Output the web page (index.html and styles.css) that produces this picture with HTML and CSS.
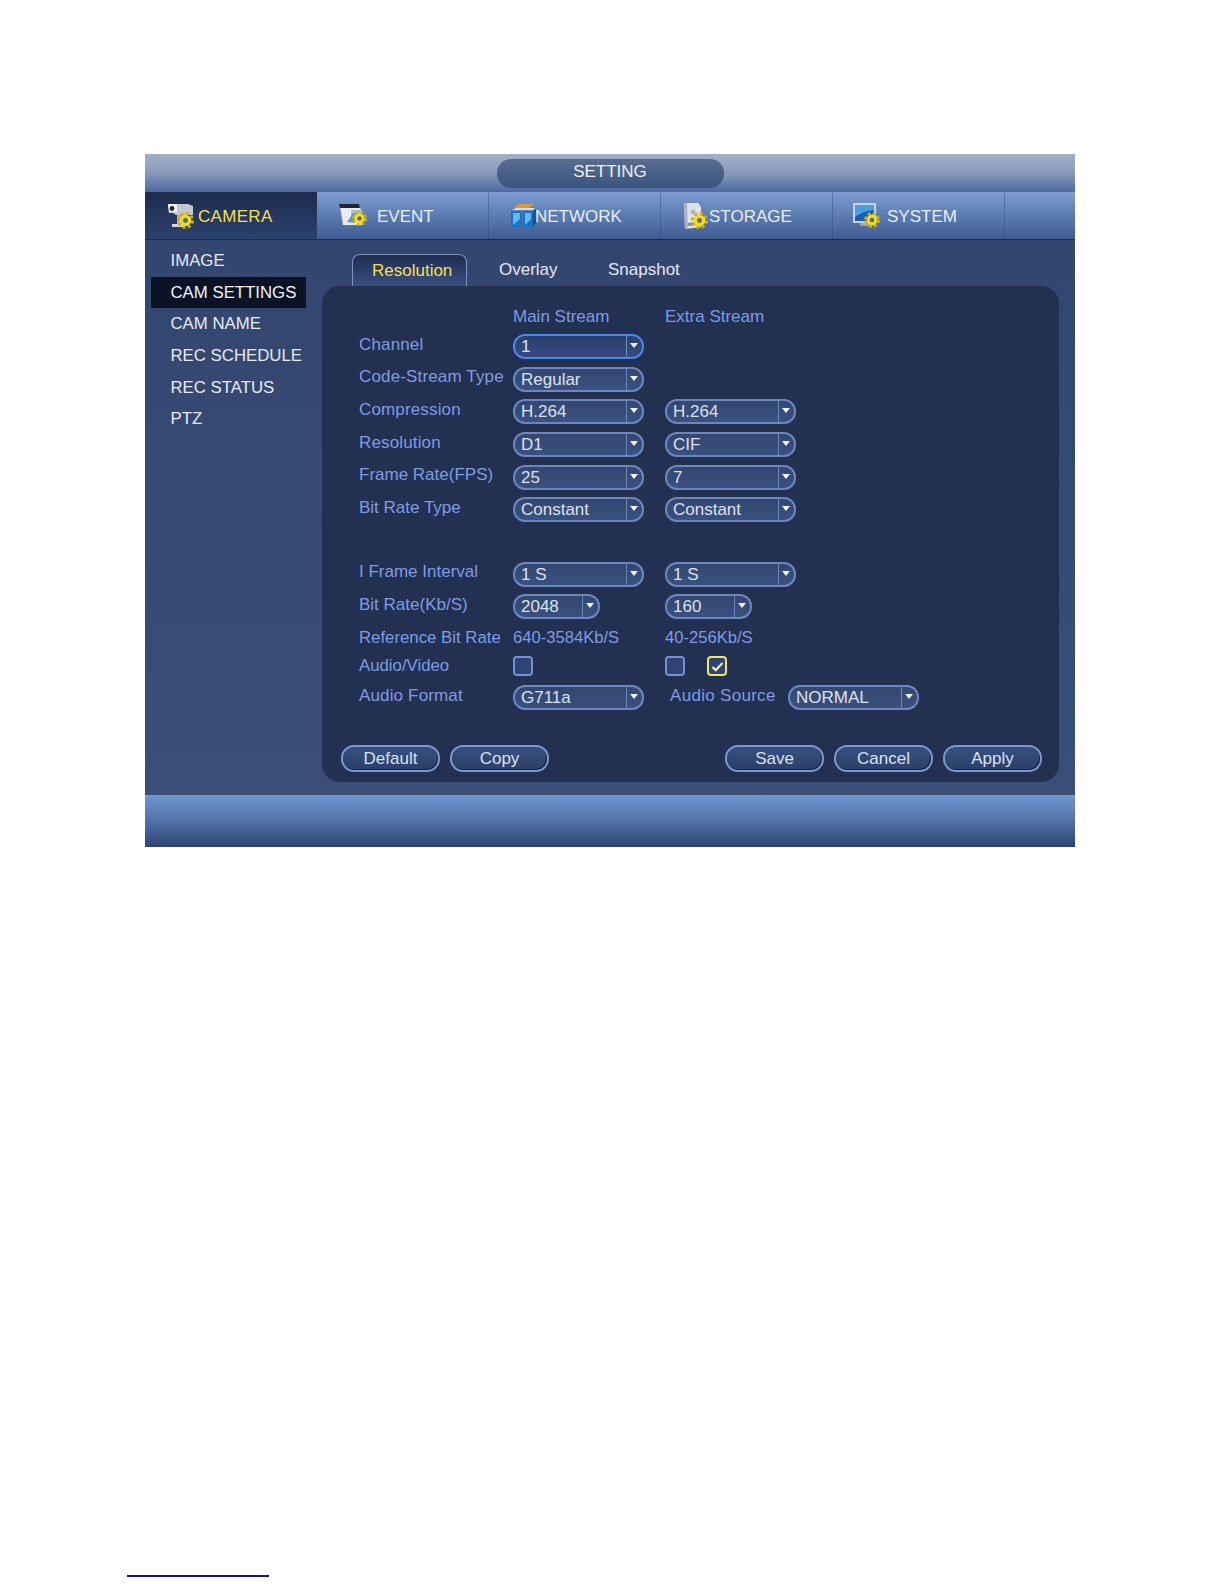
FILE: index.html
```html
<!DOCTYPE html>
<html lang="en">
<head>
  <meta charset="UTF-8" />
  <title>Setting - Camera</title>
  <link rel="stylesheet" href="styles.css">
</head>
<body>
  <svg class="defs" width="0" height="0">
    <symbol id="gear" viewBox="0 0 16 16">
      <circle cx="8" cy="8" r="6.4" fill="none" stroke="#cfae10" stroke-width="3.2" stroke-dasharray="2.8 2.23"/>
      <circle cx="8" cy="8" r="5.4" fill="#f3dc1e"/>
      <circle cx="8" cy="8" r="2.3" fill="#56687a"/>
    </symbol>
  </svg>

  <div class="page">
    <div class="dvr">
      <div class="title-bar">
        <div class="title-pill">SETTING</div>
      </div>

      <div class="nav">
        <div class="nav-tab nav-camera active">
          <svg class="nav-icon" width="27" height="26" viewBox="0 0 27 26">
            <path d="M1 1h20l5 2v9H9L6 10H2z" fill="#c3c9d2"/>
            <path d="M1 1h9v8H2z" fill="#f2f4f6"/>
            <circle cx="5" cy="5.5" r="2.4" fill="#20242c"/>
            <path d="M10 11h5v10h-5z" fill="#aeb6c2"/>
            <path d="M5 21h11v3H5z" fill="#d5dae0"/>
            <use href="#gear" x="10" y="9" width="17" height="17"/>
          </svg>
          <span>CAMERA</span>
        </div>
        <div class="nav-tab nav-event">
          <svg class="nav-icon" width="28" height="23" viewBox="0 0 28 23">
            <path d="M1 2h19l3 6v13H4z" fill="#e8ecf2"/>
            <path d="M12 6h9l2 3v6H12z" fill="#aebcd0"/>
            <path d="M0 0h20l1 4H1z" fill="#23262c"/>
            <path d="M8 18l6-9h2v10z" fill="#6f93c6"/>
            <use href="#gear" x="13" y="7" width="15" height="15"/>
          </svg>
          <span>EVENT</span>
        </div>
        <div class="nav-tab nav-network">
          <svg class="nav-icon" width="25" height="23" viewBox="0 0 25 23">
            <path d="M7 0h16l-5 4H4z" fill="#d99a3a"/>
            <path d="M1 6l4-2h19l-2 2z" fill="#cfe0ef"/>
            <path d="M0 7h11v16H0z" fill="#1a72c8"/>
            <path d="M12 7h10v16H12z" fill="#1a72c8"/>
            <path d="M2 9h7v6l-7 6zM14 9h6v6l-6 6z" fill="#63b8f2"/>
            <path d="M22 7l3-2v14l-3 4z" fill="#12508f"/>
          </svg>
          <span>NETWORK</span>
        </div>
        <div class="nav-tab nav-storage">
          <svg class="nav-icon" width="25" height="26" viewBox="0 0 25 26">
            <path d="M1 0h14l3 4v20L2 26z" fill="#dfe4ec"/>
            <path d="M1 0h3l1 26H2z" fill="#a9b3c2"/>
            <path d="M10 6l3 3-3 3-3-3z" fill="#aab4c4"/>
            <path d="M5 20l8-1v3l-8 1z" fill="#7d8797"/>
            <use href="#gear" x="8" y="9" width="17" height="17"/>
          </svg>
          <span>STORAGE</span>
        </div>
        <div class="nav-tab nav-system">
          <svg class="nav-icon" width="27" height="25" viewBox="0 0 27 25">
            <path d="M0 0h23v20H0z" fill="#c9d2de"/>
            <path d="M2 2h19v16H2z" fill="#1a5cae"/>
            <path d="M2 2h19v5Q10 8 2 14z" fill="#4a9be0"/>
            <path d="M7 20h10v3H7z" fill="#9aa6b6"/>
            <use href="#gear" x="11" y="9" width="16" height="16"/>
          </svg>
          <span>SYSTEM</span>
        </div>
      </div>

      <div class="main">
        <ul class="sidebar">
          <li>IMAGE</li>
          <li class="selected">CAM SETTINGS</li>
          <li>CAM NAME</li>
          <li>REC SCHEDULE</li>
          <li>REC STATUS</li>
          <li>PTZ</li>
        </ul>

        <div class="content">
          <div class="tabs">
            <div class="tab active">Resolution</div>
            <div class="tab">Overlay</div>
            <div class="tab">Snapshot</div>
          </div>

          <div class="panel">
            <div class="form">
              <div class="row row-head">
                <div class="label"></div>
                <div class="col">Main Stream</div>
                <div class="col">Extra Stream</div>
              </div>
              <div class="row">
                <div class="label wide">Channel</div>
                <div class="col"><div class="select focus"><span>1</span><i></i></div></div>
              </div>
              <div class="row">
                <div class="label wide">Code-Stream Type</div>
                <div class="col"><div class="select"><span>Regular</span><i></i></div></div>
              </div>
              <div class="row">
                <div class="label wide">Compression</div>
                <div class="col"><div class="select"><span>H.264</span><i></i></div></div>
                <div class="col"><div class="select"><span>H.264</span><i></i></div></div>
              </div>
              <div class="row">
                <div class="label wide">Resolution</div>
                <div class="col"><div class="select"><span>D1</span><i></i></div></div>
                <div class="col"><div class="select"><span>CIF</span><i></i></div></div>
              </div>
              <div class="row">
                <div class="label">Frame Rate(FPS)</div>
                <div class="col"><div class="select"><span>25</span><i></i></div></div>
                <div class="col"><div class="select"><span>7</span><i></i></div></div>
              </div>
              <div class="row">
                <div class="label">Bit Rate Type</div>
                <div class="col"><div class="select"><span>Constant</span><i></i></div></div>
                <div class="col"><div class="select"><span>Constant</span><i></i></div></div>
              </div>
              <div class="row row-gap">
                <div class="label">I Frame Interval</div>
                <div class="col"><div class="select"><span>1 S</span><i></i></div></div>
                <div class="col"><div class="select"><span>1 S</span><i></i></div></div>
              </div>
              <div class="row">
                <div class="label">Bit Rate(Kb/S)</div>
                <div class="col"><div class="select small"><span>2048</span><i></i></div></div>
                <div class="col"><div class="select small"><span>160</span><i></i></div></div>
              </div>
              <div class="row row-ref">
                <div class="label flat">Reference Bit Rate</div>
                <div class="col">640-3584Kb/S</div>
                <div class="col">40-256Kb/S</div>
              </div>
              <div class="row row-check">
                <div class="label flat">Audio/Video</div>
                <div class="col"><div class="check"></div></div>
                <div class="col checks">
                  <div class="check"></div>
                  <div class="check on">
                    <svg width="15" height="15" viewBox="0 0 15 15"><path d="M2.5 8l3.2 3.2L12.5 4" fill="none" stroke="#f6f0c8" stroke-width="2"/></svg>
                  </div>
                </div>
              </div>
              <div class="row row-last">
                <div class="label wide">Audio Format</div>
                <div class="col"><div class="select"><span>G711a</span><i></i></div></div>
                <div class="label wide source">Audio Source</div>
                <div class="select"><span>NORMAL</span><i></i></div>
              </div>
            </div>

            <div class="buttons">
              <button class="btn">Default</button>
              <button class="btn">Copy</button>
              <div class="spacer"></div>
              <button class="btn">Save</button>
              <button class="btn">Cancel</button>
              <button class="btn">Apply</button>
            </div>
          </div>
        </div>
      </div>

      <div class="footer"></div>
    </div>

    <div class="foot-rule"></div>
  </div>
</body>
</html>
```

FILE: styles.css
```css
body {
  margin: 0;
  background: #fff;
  font-family: "Liberation Sans", Arial, sans-serif;
  font-size: 17px;
}

.defs {
  position: absolute;
}

.page {
  padding: 154px 0 0 127px;
}

.dvr {
  width: 930px;
  margin-left: 18px;
}

.title-bar {
  height: 38px;
  display: flex;
  justify-content: center;
  align-items: center;
  background: linear-gradient(#a3afc6, #8c9dbd 45%, #4d6a9f);
}

.title-pill {
  width: 227px;
  height: 29px;
  line-height: 26px;
  text-align: center;
  border-radius: 14px;
  color: #eef1f6;
  background: linear-gradient(#596c8f, #4a6187 50%, #3a5482);
}

.nav {
  height: 48px;
  display: flex;
  border-bottom: 1px solid #1d2c4e;
  box-sizing: border-box;
  background: linear-gradient(#7f9dd3, #5f7fb4 45%, #3f5c92);
}

.nav-tab {
  width: 172px;
  box-sizing: border-box;
  display: flex;
  align-items: center;
  padding-left: 22px;
  border-right: 1px solid rgba(40, 60, 100, 0.35);
  color: #e8eef8;
}

.nav-tab span {
  padding-top: 2px;
}

.nav-tab.active {
  border-right: 0;
  color: #f4e04e;
  background: linear-gradient(#1d2c4e, #2c416d);
}

.nav-tab.active span {
  letter-spacing: 0.3px;
}

.nav-icon {
  flex: none;
}

.nav-camera .nav-icon { margin-right: 4px; }
.nav-event .nav-icon { margin-right: 10px; }
.nav-network .nav-icon { margin-right: -1px; }
.nav-storage .nav-icon { margin-right: 1px; }
.nav-system .nav-icon { margin-left: -2px; margin-right: 7px; }

.main {
  height: 555px;
  display: flex;
  background: linear-gradient(#33466f, #3a4e78);
}

.sidebar {
  width: 177px;
  box-sizing: border-box;
  margin: 0;
  padding: 5px 0 0 6px;
  list-style: none;
  color: #e6ebf4;
  font-size: 16.8px;
}

.sidebar li {
  width: 155px;
  height: 31.7px;
  line-height: 31.7px;
  box-sizing: border-box;
  padding-left: 19.5px;
  white-space: nowrap;
}

.sidebar li.selected {
  background: #0a1226;
  color: #f1f4f9;
}

.content {
  width: 737px;
  padding-top: 14px;
}

.tabs {
  height: 32px;
  display: flex;
  padding-left: 30px;
}

.tab {
  width: 109px;
  box-sizing: border-box;
  padding-left: 32px;
  line-height: 31px;
  color: #e3e9f3;
}

.tab.active {
  width: 115px;
  padding-left: 19px;
  color: #f6df55;
  border: 1px solid #7d93bd;
  border-bottom: 0;
  border-radius: 8px 8px 0 0;
  background: linear-gradient(#1e2d50, #3a5080);
}

.panel {
  height: 496px;
  box-sizing: border-box;
  padding: 14px 17px 10px 19px;
  display: flex;
  flex-direction: column;
  border-radius: 18px;
  background: #223152;
}

.form {
  padding-left: 18px;
}

.row {
  height: 32.6px;
  display: flex;
  align-items: center;
  color: #7f9be2;
}

.row-head { height: 30.5px; }
.row-head .col { padding-top: 3px; }
.row-gap { margin-top: 32px; }
.row-ref { height: 25px; padding-top: 2px; }
.row-ref .col { font-size: 16.6px; }
.row-check { height: 32px; }
.row-last { height: 31px; }

.label {
  width: 154px;
  flex: none;
  padding-bottom: 4px;
  white-space: nowrap;
}

.label.wide {
  letter-spacing: 0.15px;
}

.label.flat {
  padding-bottom: 0;
  font-size: 16.8px;
}

.label.source {
  width: 118px;
  padding-left: 5px;
  letter-spacing: 0.3px;
}

.col {
  width: 152px;
  flex: none;
  white-space: nowrap;
}

.select {
  width: 131px;
  height: 25px;
  box-sizing: border-box;
  display: flex;
  border: 2px solid #6c86bf;
  border-radius: 12px;
  color: #dbe2ef;
  background: linear-gradient(#33476f, #3a5080);
}

.select.focus {
  border-color: #4f86e6;
  background: linear-gradient(#2b3f6c, #354c80);
}

.select.small {
  width: 87px;
}

.select span {
  flex: 1;
  padding-left: 6px;
  line-height: 22px;
}

.select i {
  width: 15px;
  position: relative;
  border-left: 1px solid #6c86bf;
}

.select i::after {
  content: "";
  position: absolute;
  left: 3px;
  top: 7px;
  border: 4px solid transparent;
  border-top: 5px solid #f0f3f8;
  border-bottom: 0;
}

.checks {
  display: flex;
  gap: 22px;
}

.check {
  width: 20px;
  height: 20px;
  box-sizing: border-box;
  display: flex;
  align-items: center;
  justify-content: center;
  border: 2px solid #7390d4;
  border-radius: 4px;
  background: #2f4472;
}

.check.on {
  border-color: #f1e36a;
}

.buttons {
  margin-top: auto;
  display: flex;
  gap: 10px;
}

.spacer {
  flex: 1;
}

.btn {
  width: 99px;
  height: 27px;
  padding: 0;
  border: 2px solid #7d97cc;
  border-radius: 13px;
  box-shadow: inset -1px -1px 0 #16233f;
  color: #d9e1ef;
  font: inherit;
  background: linear-gradient(#36507f, #2b4069);
}

.footer {
  height: 52px;
  background: linear-gradient(#7296cf, #5576ad 45%, #2c4474);
}

.foot-rule {
  width: 142px;
  height: 2px;
  margin-top: 728px;
  background: #14148c;
}
```
